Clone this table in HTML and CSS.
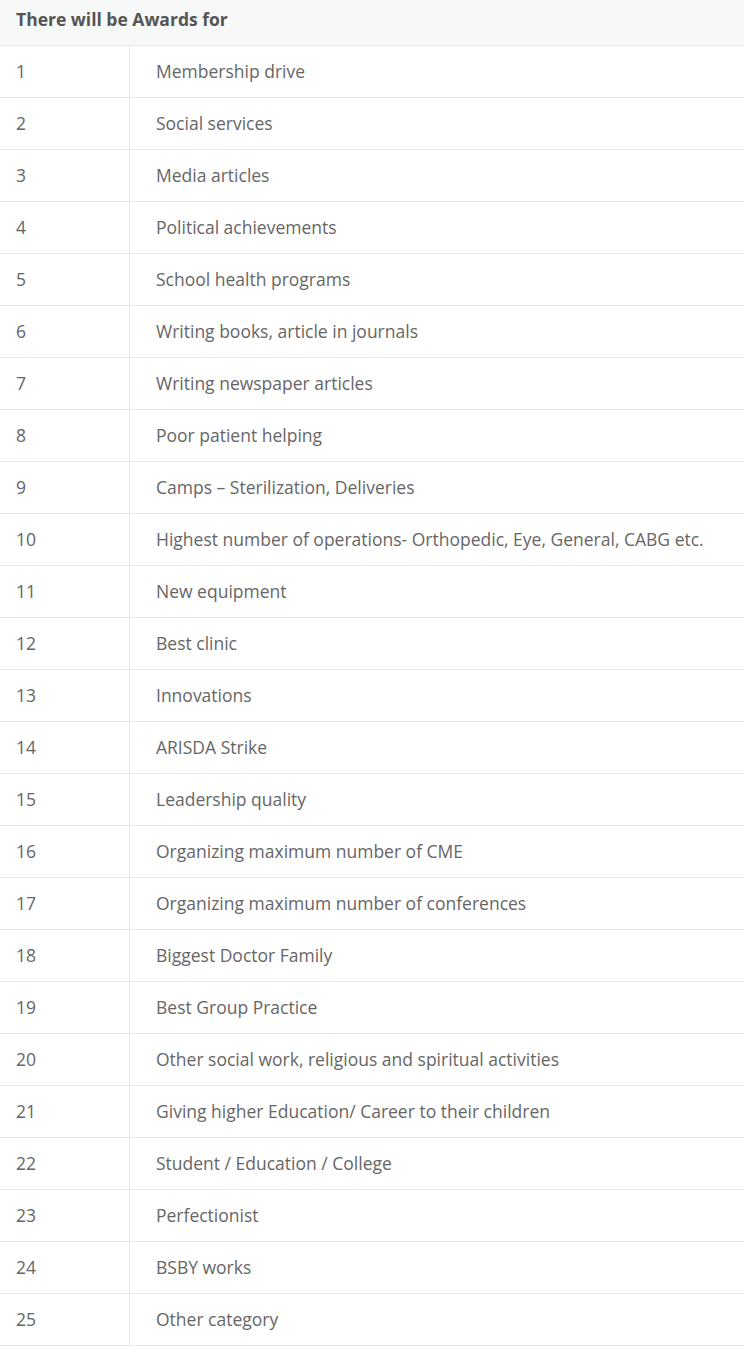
FILE: index.html
```html
<!DOCTYPE html>
<html lang="en">
<head>
    <meta charset="UTF-8">
    <meta name="viewport" content="width=device-width, initial-scale=1.0">
    <title>Awards</title>
    <link rel="stylesheet" href="styles.css">
</head>
<body>
    <table class="awards">
        <thead>
            <tr><th colspan="2">There will be Awards for</th></tr>
        </thead>
        <tbody>
            <tr><td class="num">1</td><td>Membership drive</td></tr>
            <tr><td class="num">2</td><td>Social services</td></tr>
            <tr><td class="num">3</td><td>Media articles</td></tr>
            <tr><td class="num">4</td><td>Political achievements</td></tr>
            <tr><td class="num">5</td><td>School health programs</td></tr>
            <tr><td class="num">6</td><td>Writing books, article in journals</td></tr>
            <tr><td class="num">7</td><td>Writing newspaper articles</td></tr>
            <tr><td class="num">8</td><td>Poor patient helping</td></tr>
            <tr><td class="num">9</td><td>Camps – Sterilization, Deliveries</td></tr>
            <tr><td class="num">10</td><td>Highest number of operations- Orthopedic, Eye, General, CABG etc.</td></tr>
            <tr><td class="num">11</td><td>New equipment</td></tr>
            <tr><td class="num">12</td><td>Best clinic</td></tr>
            <tr><td class="num">13</td><td>Innovations</td></tr>
            <tr><td class="num">14</td><td>ARISDA Strike</td></tr>
            <tr><td class="num">15</td><td>Leadership quality</td></tr>
            <tr><td class="num">16</td><td>Organizing maximum number of CME</td></tr>
            <tr><td class="num">17</td><td>Organizing maximum number of conferences</td></tr>
            <tr><td class="num">18</td><td>Biggest Doctor Family</td></tr>
            <tr><td class="num">19</td><td>Best Group Practice</td></tr>
            <tr><td class="num">20</td><td>Other social work, religious and spiritual activities</td></tr>
            <tr><td class="num">21</td><td>Giving higher Education/ Career to their children</td></tr>
            <tr><td class="num">22</td><td>Student / Education / College</td></tr>
            <tr><td class="num">23</td><td>Perfectionist</td></tr>
            <tr><td class="num">24</td><td>BSBY works</td></tr>
            <tr><td class="num">25</td><td>Other category</td></tr>
        </tbody>
    </table>
</body>
</html>
```
FILE: styles.css
```css
body {
    margin: 0;
    padding: 0;
    background-color: #fff;
    font-family: 'Open Sans', sans-serif;
}

.awards {
    width: 744px;
    border-collapse: collapse;
    color: #666;
    font-size: 17.5px;
}

.awards th {
    height: 45px;
    padding: 7px 16px 0;
    box-sizing: border-box;
    vertical-align: top;
    text-align: left;
    font-weight: bold;
    color: #555;
    background-color: #f7f8f8;
    border-bottom: 1px solid #e8e8e8;
}

.awards td {
    height: 51px;
    padding: 0 0 0 26px;
    border-bottom: 1px solid #e8e8e8;
    white-space: nowrap;
}

.awards td.num {
    width: 113px;
    padding-left: 16px;
    border-right: 1px solid #e8e8e8;
}
```
